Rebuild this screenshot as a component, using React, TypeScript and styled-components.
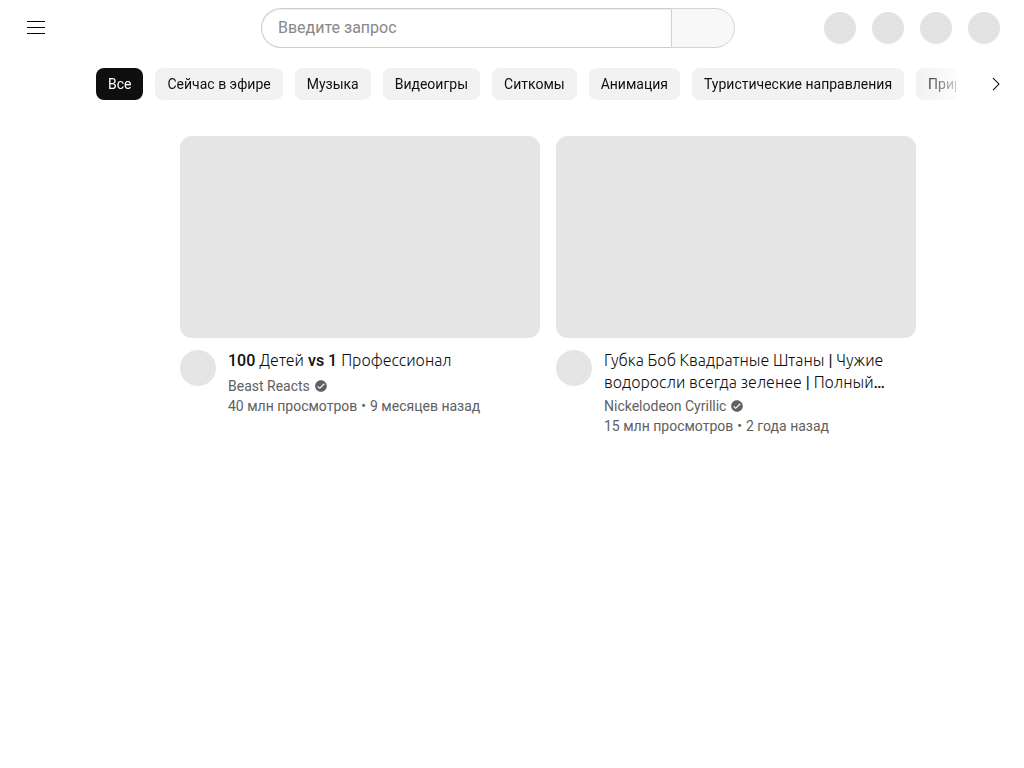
import React from "react";
import styled, { createGlobalStyle } from "styled-components";

const GlobalStyle = createGlobalStyle`
  *, *::before, *::after { box-sizing: border-box; }
  body {
    margin: 0;
    background: #fff;
    color: #0f0f0f;
    font-family: Roboto, "Liberation Sans", sans-serif;
    font-size: 14px;
    line-height: 20px;
  }
  button, input { font: inherit; color: inherit; }
`;

const Header = styled.header`
  display: grid;
  grid-template-columns: 156px minmax(0, 1fr) auto;
  column-gap: 89px;
  align-items: center;
  height: 56px;
  padding: 0 24px 0 16px;
`;

const IconButton = styled.button`
  display: flex;
  align-items: center;
  justify-content: center;
  flex: none;
  width: 40px;
  height: 40px;
  padding: 0;
  border: 0;
  border-radius: 50%;
  background: none;
  cursor: pointer;
`;

const SearchForm = styled.form`
  display: flex;
  height: 40px;
`;

const SearchInput = styled.input`
  flex: 1;
  min-width: 0;
  padding: 0 16px;
  border: 1px solid #ccc;
  border-right: 0;
  border-radius: 40px 0 0 40px;
  background: #fff;
  box-shadow: inset 0 1px 2px #eee;
  font-size: 16px;
  line-height: 24px;
  outline: 0;
  &::placeholder { color: #888; opacity: 1; }
`;

const SearchButton = styled.button`
  width: 64px;
  border: 1px solid #d3d3d3;
  border-radius: 0 40px 40px 0;
  background: #f8f8f8;
  cursor: pointer;
`;

const Actions = styled.div`
  display: flex;
  gap: 16px;
`;

const ActionButton = styled.button`
  width: 32px;
  height: 32px;
  padding: 0;
  border: 0;
  border-radius: 50%;
  background: #e3e3e3;
  cursor: pointer;
`;

const Page = styled.div`
  margin-left: 72px;
`;

const FilterBar = styled.nav`
  display: flex;
  align-items: center;
  height: 56px;
  padding: 0 8px 0 24px;
`;

const ChipScroller = styled.div`
  display: flex;
  gap: 12px;
  flex: 1;
  min-width: 0;
  margin-right: 20px;
  overflow: hidden;
  mask-image: linear-gradient(to left, rgba(0, 0, 0, 0.2) 0, #000 36px);
`;

const Chip = styled.button<{ $active?: boolean }>`
  flex: none;
  height: 32px;
  padding: 0 12px;
  border: 0;
  border-radius: 8px;
  background: ${(p) => (p.$active ? "#0f0f0f" : "#f2f2f2")};
  color: ${(p) => (p.$active ? "#fff" : "#0f0f0f")};
  white-space: nowrap;
  cursor: pointer;
`;

const VideoGrid = styled.main`
  display: grid;
  grid-template-columns: repeat(2, minmax(0, 1fr));
  gap: 40px 16px;
  max-width: 736px;
  margin: 0 auto;
  padding-top: 24px;
`;

const Thumbnail = styled.a`
  display: block;
  aspect-ratio: 360 / 202;
  border-radius: 12px;
  background: #e5e5e5;
`;

const Details = styled.div`
  display: flex;
  gap: 12px;
  margin-top: 12px;
`;

const ChannelAvatar = styled.a`
  flex: none;
  width: 36px;
  height: 36px;
  border-radius: 50%;
  background: #e5e5e5;
`;

const Info = styled.div`
  min-width: 0;
  padding-right: 24px;
  color: #606060;
`;

const Title = styled.h3`
  min-height: 24px;
  margin: 0 0 2px;
  color: #0f0f0f;
  font-size: 16px;
  font-weight: 500;
  line-height: 22px;
`;

const Cyrillic = styled.span`
  font-family: Ubuntu, Roboto, sans-serif;
  font-weight: 300;
  line-height: 1;
`;

const PlainLink = styled.a`
  color: inherit;
  text-decoration: none;
`;

const Channel = styled.div`
  display: flex;
  align-items: center;
  gap: 4px;
`;

const Meta = styled.div`
  display: flex;
  gap: 4px;
  white-space: nowrap;
`;

const filters = [
  "Все",
  "Сейчас в эфире",
  "Музыка",
  "Видеоигры",
  "Ситкомы",
  "Анимация",
  "Туристические направления",
  "Природа",
];

const videos = [
  {
    title: "100 Детей vs 1 Профессионал",
    channel: "Beast Reacts",
    views: "40 млн просмотров",
    age: "9 месяцев назад",
  },
  {
    title: "Губка Боб Квадратные Штаны | Чужие водоросли всегда зеленее | Полный…",
    channel: "Nickelodeon Cyrillic",
    views: "15 млн просмотров",
    age: "2 года назад",
  },
];

/* Cyrillic words are set in a light face, Latin and digits in medium Roboto. */
const TitleText = ({ text }: { text: string }) => (
  <>
    {text.split(/([а-яё]+(?: [а-яё]+)*)/i).map((part, i) =>
      i % 2 ? <Cyrillic key={i}>{part}</Cyrillic> : part
    )}
  </>
);

const MenuIcon = () => (
  <svg width="24" height="24" viewBox="0 0 24 24" aria-hidden="true">
    <path d="M21 6H3V5h18v1zm0 5H3v1h18v-1zm0 6H3v1h18v-1z" />
  </svg>
);

const NextIcon = () => (
  <svg width="24" height="24" viewBox="0 0 24 24" aria-hidden="true">
    <path d="M9.4 18.4l-.7-.7 5.6-5.6-5.7-5.7.7-.7 6.4 6.4-6.3 6.3z" />
  </svg>
);

const VerifiedIcon = () => (
  <svg width="14" height="14" viewBox="0 0 24 24" fill="#606060" role="img" aria-label="Подтверждено">
    <path d="M12 2C6.5 2 2 6.5 2 12s4.5 10 10 10 10-4.5 10-10S17.5 2 12 2zM9.8 17.3l-4.2-4.1L7 11.8l2.8 2.7L17 7.4l1.4 1.4-8.6 8.5z" />
  </svg>
);

export default function App() {
  return (
    <>
      <GlobalStyle />
      <Header>
        <IconButton type="button" aria-label="Меню">
          <MenuIcon />
        </IconButton>
        <SearchForm role="search" onSubmit={(e) => e.preventDefault()}>
          <SearchInput type="text" placeholder="Введите запрос" aria-label="Введите запрос" />
          <SearchButton type="submit" aria-label="Поиск" />
        </SearchForm>
        <Actions>
          {["Создать", "Приложения", "Уведомления", "Аккаунт"].map((label) => (
            <ActionButton key={label} type="button" aria-label={label} />
          ))}
        </Actions>
      </Header>
      <Page>
        <FilterBar>
          <ChipScroller>
            {filters.map((label, i) => (
              <Chip key={label} type="button" $active={i === 0}>
                {label}
              </Chip>
            ))}
          </ChipScroller>
          <IconButton type="button" aria-label="Далее">
            <NextIcon />
          </IconButton>
        </FilterBar>
        <VideoGrid>
          {videos.map((video) => (
            <article key={video.title}>
              <Thumbnail href="#" aria-label={video.title} />
              <Details>
                <ChannelAvatar href="#" aria-label={video.channel} />
                <Info>
                  <Title>
                    <PlainLink href="#">
                      <TitleText text={video.title} />
                    </PlainLink>
                  </Title>
                  <Channel>
                    <PlainLink href="#">{video.channel}</PlainLink>
                    <VerifiedIcon />
                  </Channel>
                  <Meta>
                    <span>{video.views}</span>
                    <span>•</span>
                    <span>{video.age}</span>
                  </Meta>
                </Info>
              </Details>
            </article>
          ))}
        </VideoGrid>
      </Page>
    </>
  );
}
